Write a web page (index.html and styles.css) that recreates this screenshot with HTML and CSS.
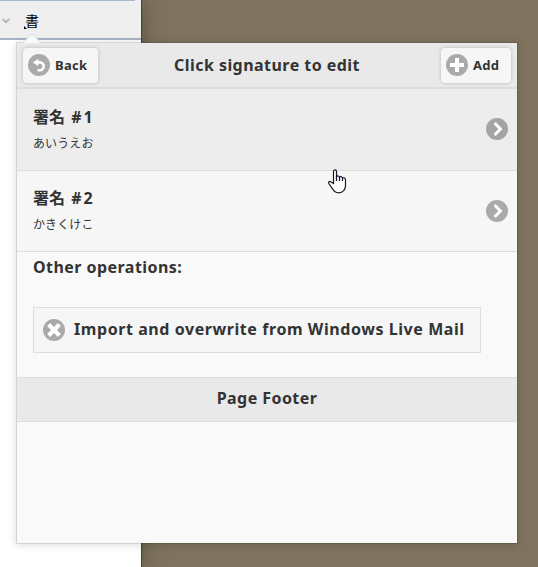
FILE: index.html
```html
<!DOCTYPE html>
<html lang="en">
<head>
<meta charset="utf-8">
<title>Signatures</title>
<link rel="stylesheet" href="styles.css">
</head>
<body>
<div class="mail">
  <div class="toolbar">
    <svg class="caret" width="8" height="6" viewBox="0 0 8 6"><path d="M.6 .9 4 4.2 7.4 .9" fill="none" stroke="#b5b5b5" stroke-width="2"/></svg>
    <span class="tool">書</span>
    <svg class="mark" width="3" height="3" viewBox="0 0 3 3"><path d="M0 0v3h3z"/></svg>
  </div>
</div>
<section class="popup">
  <svg class="arrow" width="18" height="10" viewBox="0 0 18 10"><path d="M0 10 9 .8 18 10z" fill="#f9f9f9"/><path d="M0 9.5 9 .7l9 8.8" fill="none" stroke="#d5d8dc"/></svg>
  <header class="header">
    <button class="btn">
      <svg class="icon" viewBox="0 0 22 22"><circle cx="11" cy="11" r="11"/><path class="solid" d="M4.9 8.5 10.3 4.7v7.6z"/><path class="line back" d="M9.5 8.4h2.3a3.9 3.9 0 0 1 0 7.8H9.5"/></svg>
      <span class="label">Back</span>
    </button>
    <h1 class="title">Click signature to edit</h1>
    <button class="btn add">
      <svg class="icon" viewBox="0 0 22 22"><circle cx="11" cy="11" r="11"/><path class="solid" d="M9 4h4v5h5v4h-5v5H9v-5H4V9h5z"/></svg>
      <span class="label">Add</span>
    </button>
  </header>
  <ul class="list">
    <li class="item hover">
      <div><h2 class="name">署名 <span class="num">#1</span></h2><p class="preview">あいうえお</p></div>
      <svg class="icon" viewBox="0 0 22 22"><circle cx="11" cy="11" r="11"/><path class="line" d="m8.6 5 5.8 6-5.8 6"/></svg>
    </li>
    <li class="item">
      <div><h2 class="name">署名 <span class="num">#2</span></h2><p class="preview">かきくけこ</p></div>
      <svg class="icon" viewBox="0 0 22 22"><circle cx="11" cy="11" r="11"/><path class="line" d="m8.6 5 5.8 6-5.8 6"/></svg>
    </li>
  </ul>
  <div class="content">
    <h2 class="ops">Other operations:</h2>
    <button class="import">
      <svg class="icon" viewBox="0 0 22 22"><circle cx="11" cy="11" r="11"/><path class="line cross" d="m5.6 5.6 10.8 10.8m0-10.8L5.6 16.4"/></svg>
      <span class="import-label">Import and overwrite from Windows Live Mail</span>
    </button>
  </div>
  <footer class="footer"><span class="footer-label">Page Footer</span></footer>
  <svg class="cursor" width="19" height="25" viewBox="0 0 19 25"><path d="M5.5 14.5V2.6C5.5.4 8.5.4 8.5 2.6v5.2c.8-1.3 2.6-1 3 .4 1-.9 2.6-.5 3 .8 1.4-.7 3 .2 3 1.8v5.7c0 4.1-2.6 7.3-6.8 7.3-3 0-5-1.7-6.2-4L.8 14.5c-.8-1.7 1-2.7 2.2-1.5z" fill="#fff" stroke="#17172b" stroke-width="1.2"/><path d="M8.5 7v5m3-4v4m3-3v3" stroke="#17172b" stroke-width="1.2"/></svg>
</section>
</body>
</html>
```
FILE: styles.css
```css
* { box-sizing: border-box; }
body {
  margin: 0;
  width: 538px;
  height: 567px;
  overflow: hidden;
  position: relative;
  background: #7f735f;
  color: #333;
  font-family: "Noto Sans", "Noto Sans CJK JP", sans-serif;
}
h1, h2, p, ul { margin: 0; padding: 0; }
button { font: inherit; color: inherit; }
.mail {
  width: 142px;
  height: 567px;
  background: #fff;
  border-right: 1px solid #45443c;
  box-shadow: 0 0 18px rgba(50, 50, 30, .55);
}
.toolbar {
  display: flex;
  align-items: center;
  height: 40px;
  padding: 1px 0 0 2px;
  background: linear-gradient(#a9b8d0, #a9b8d0) 0 0 / 135px 1px no-repeat, #efefef;
  border-bottom: 2px solid #a9b5c7;
  position: relative;
}
.caret { margin-top: 3px; }
.tool {
  margin-left: 15px;
  font-size: 14px;
  line-height: 20px;
  color: #000;
  font-family: "Noto Sans CJK JP", sans-serif;
}
.mark { position: absolute; left: 24px; top: 26px; }
.popup {
  position: absolute;
  left: 16px;
  top: 42px;
  width: 502px;
  height: 502px;
  background: #f9f9f9;
  background-clip: padding-box;
  border: 1px solid rgba(0, 0, 0, .1);
  box-shadow: 0 1px 8px rgba(0, 0, 0, .15);
}
.arrow { position: absolute; left: 6px; top: -10px; }
.header {
  display: flex;
  align-items: center;
  justify-content: space-between;
  height: 46px;
  padding: 0 6px;
  background: #e9e9e9;
  border-bottom: 2px solid #ddd;
}
.btn {
  display: flex;
  align-items: center;
  gap: 5px;
  width: 75px;
  height: 35px;
  padding: 0 5px;
  border: 0;
  border-radius: 4px;
  background: #f6f6f6;
  box-shadow: 0 0 3px 1px rgba(0, 0, 0, .13);
}
.add { width: 70px; }
.icon { width: 22px; height: 22px; flex: none; fill: #aaa; }
.hover .icon { fill: #a4a4a4; margin-bottom: 1px; }
.solid { fill: #fff; }
.line { fill: none; stroke: #fff; stroke-width: 3; }
.back { stroke-width: 2.6; }
.cross { stroke-width: 4.2; }
.label {
  font-weight: 700;
  font-size: 13px;
  line-height: 18px;
  letter-spacing: .3px;
  margin-top: -1px;
}
.title {
  font-size: 16px;
  line-height: 22px;
  letter-spacing: .46px;
  white-space: nowrap;
  margin-right: 5px;
}
.list { list-style: none; }
.item {
  display: flex;
  align-items: center;
  justify-content: space-between;
  height: 81px;
  padding: 0 9px 0 16px;
  background: #f6f6f6;
  border-bottom: 1px solid #ddd;
}
.hover { height: 82px; background: #ededed; }
.name {
  font-size: 16px;
  line-height: 24px;
  word-spacing: 2px;
  margin-top: -3px;
}
.num { letter-spacing: 2px; }
.hover .name { margin-top: -2px; }
.preview { font-size: 12px; line-height: 18px; margin-top: 6px; letter-spacing: .1px; }
.content { height: 125px; padding: 3px 16px 0; }
.ops { font-size: 16px; line-height: 24px; letter-spacing: .45px; }
.import {
  display: flex;
  align-items: center;
  gap: 9px;
  width: 448px;
  height: 46px;
  margin-top: 28px;
  padding: 0 9px;
  background: #f6f6f6;
  border: 1px solid #ddd;
}
.import-label {
  font-size: 16px;
  font-weight: 700;
  line-height: 24px;
  letter-spacing: .57px;
  white-space: nowrap;
  margin-top: -2px;
}
.footer {
  height: 45px;
  border: solid #ddd;
  border-width: 1px 0;
  background: #e9e9e9;
  text-align: center;
  font-size: 16px;
  font-weight: 700;
  line-height: 41px;
  letter-spacing: .44px;
}
.cursor { position: absolute; left: 311px; top: 126px; }
```
